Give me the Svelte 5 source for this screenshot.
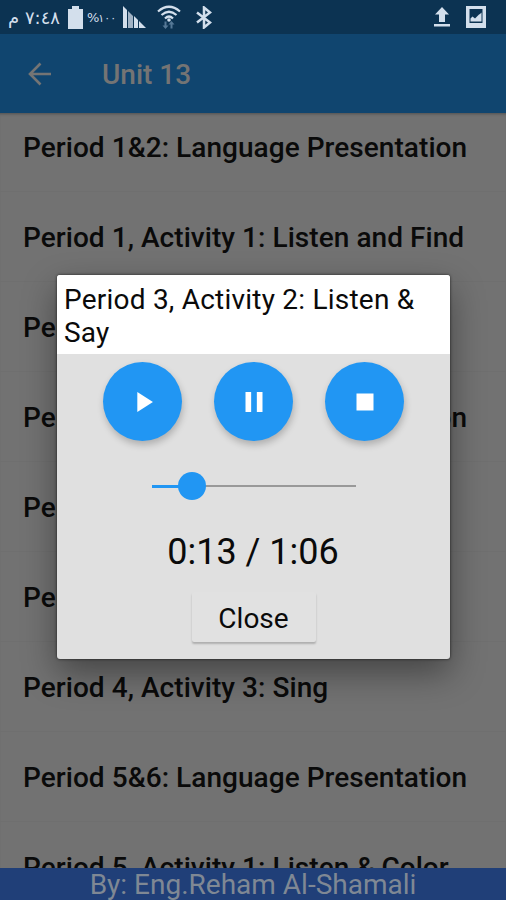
<script>
    let unit = "Unit 13";
    let lessons = [
        "Period 1&2: Language Presentation",
        "Period 1, Activity 1: Listen and Find",
        "Period 2, Activity 1: Listen & Say",
        "Period 3&4: Language Presentation",
        "Period 3, Activity 2: Listen & Say",
        "Period 4, Activity 1: Listen & Say",
        "Period 4, Activity 3: Sing",
        "Period 5&6: Language Presentation",
        "Period 5, Activity 1: Listen & Color",
    ];
    let current = lessons[4];

    let elapsed = 13;
    let duration = 66;

    const format = (s) => `${Math.floor(s / 60)}:${String(s % 60).padStart(2, "0")}`;

    // Material icon paths, 24x24
    let controls = [
        { name: "Play", path: "M8 5v14l11-7z" },
        { name: "Pause", path: "M6 19h4V5H6v14zm8-14v14h4V5h-4z" },
        { name: "Stop", path: "M6 6h12v12H6z" },
    ];
</script>

<div class="screen">
    <div class="status">
        <div class="group">
            <span class="clock" dir="rtl">٧:٤٨ م</span>
            <svg class="battery" width="15" height="23" viewBox="0 0 15 23">
                <path d="M4 0h7v3h4v20H0V3h4z" />
            </svg>
            <span class="percent">%<span class="digits">١٠٠</span></span>
            <svg class="signal" width="23" height="22" viewBox="0 0 23 22">
                <path d="M0 0l4 4v18H0z" />
                <path d="M5 5l5 5v12H5z" opacity="0.75" />
                <path d="M11 10l4 4v8h-4z" />
                <path d="M16 15l7 7h-7z" />
            </svg>
            <svg class="wifi" width="24" height="25" viewBox="0 0 24 25">
                <g fill="none" stroke="#d3dfec" stroke-width="2.2">
                    <path d="M1 6.5Q12-3 23 6.5" />
                    <path d="M4.5 10Q12 3.5 19.5 10" />
                    <path d="M8 13.5Q12 9.5 16 13.5" />
                </g>
                <circle cx="12" cy="15" r="1.8" />
                <path
                    d="M8.5 24l-3-3.500h2v-4h2v4h2zM14.500 16l3 3.500h-2v4h-2v-4h-2z"
                    fill="#557896"
                />
            </svg>
            <svg class="bluetooth" width="16" height="23" viewBox="0 0 16 23">
                <path
                    d="M1 6.500l13 10-6 5V1.500l6 5-13 10"
                    fill="none"
                    stroke="#d3dfec"
                    stroke-width="2.500"
                />
            </svg>
        </div>
        <div class="group">
            <svg class="upload" width="16" height="20" viewBox="0 0 16 20">
                <path d="M8 0l7 7.500h-4V15H5V7.500H1zM0 17h16v2.500H0z" />
            </svg>
            <svg width="20" height="22" viewBox="0 0 20 22">
                <path
                    d="M0 0h20v22H0zM3.500 3v14h13V3z"
                    fill-rule="evenodd"
                />
                <path d="M4.500 15.500v-3l2-2 2.500 2 4-4 1-.5 1.500-1.500v9z" />
            </svg>
        </div>
    </div>

    <header>
        <svg width="24" height="24" viewBox="0 0 24 24">
            <path
                d="M23 12H2M12.500 1.500L2 12l10.500 10.500"
                fill="none"
                stroke="#747474"
                stroke-width="2.600"
            />
        </svg>
        <h1>{unit}</h1>
    </header>

    <ul>
        {#each lessons as lesson}
            <li>{lesson}</li>
        {/each}
    </ul>

    <footer>By: Eng.Reham Al-Shamali</footer>

    <div class="dialog">
        <h2>{current}</h2>
        <div class="controls">
            {#each controls as control}
                <button class="round" aria-label={control.name}>
                    <svg width="34" height="34" viewBox="0 0 24 24">
                        <path d={control.path} />
                    </svg>
                </button>
            {/each}
        </div>
        <div class="slider">
            <div class="played" style="width: {(elapsed / duration) * 100}%"></div>
            <div class="thumb"></div>
            <div class="rest"></div>
        </div>
        <div class="time">{format(elapsed)} / {format(duration)}</div>
        <button class="close">Close</button>
    </div>
</div>

<style>
    :global(body) {
        margin: 0;
    }

    .screen {
        position: relative;
        display: flex;
        flex-direction: column;
        width: 506px;
        height: 900px;
        overflow: hidden;
        background: #727272;
        font-family: Roboto, "Liberation Sans", sans-serif;
        color: #0a0a0a;
    }

    .status {
        display: flex;
        justify-content: space-between;
        flex: none;
        height: 34px;
        box-sizing: border-box;
        padding: 0 20px 0 9px;
        background: #0c3352;
        color: #d3dfec;
    }

    .status svg {
        fill: #d3dfec;
    }

    .group {
        display: flex;
        align-items: center;
    }

    .clock {
        width: 51px;
        font: 18px "DejaVu Sans", sans-serif;
        white-space: nowrap;
    }

    .battery {
        margin-left: 8px;
    }

    .percent {
        width: 28px;
        margin: 0 8px 0 4px;
        font: 13px "DejaVu Sans", sans-serif;
        white-space: nowrap;
        /* keeps the percent sign on the left */
        direction: ltr;
        unicode-bidi: bidi-override;
    }

    .digits {
        font-size: 11px;
        margin-left: -1px;
    }

    .wifi {
        margin-left: 11px;
    }

    .bluetooth {
        margin-left: 15px;
    }

    .upload {
        margin-right: 16px;
    }

    header {
        display: flex;
        align-items: center;
        flex: none;
        height: 79px;
        box-sizing: border-box;
        padding: 0 28px 0;
        background: #10456f;
        color: #747474;
    }

    h1 {
        margin: 2px 0 0 50px;
        font-size: 28px;
        font-weight: 500;
    }

    ul {
        flex: 1;
        min-height: 0;
        margin: 0;
        padding: 0;
        overflow: hidden;
        list-style: none;
        box-shadow: inset 0 3px 3px -2px rgba(0, 0, 0, 0.3);
    }

    li {
        height: 90px;
        box-sizing: border-box;
        padding-left: 23px;
        border-bottom: 1px solid #6f6f6f;
        font-size: 28px;
        font-weight: 500;
        letter-spacing: 0.05px;
        line-height: 92px;
        white-space: nowrap;
    }

    li:first-child {
        margin-top: -11px;
    }

    footer {
        flex: none;
        height: 32px;
        background: #203f78;
        color: #7f8894;
        font-size: 28px;
        line-height: 34px;
        text-align: center;
    }

    .dialog {
        position: absolute;
        top: 275px;
        left: 57px;
        display: flex;
        flex-direction: column;
        align-items: center;
        width: 393px;
        height: 384px;
        overflow: hidden;
        border-radius: 3px;
        background: #e0e0e0;
        box-shadow:
            0 0 3px rgba(0, 0, 0, 0.7),
            0 14px 34px rgba(0, 0, 0, 0.4);
    }

    h2 {
        align-self: stretch;
        height: 79px;
        box-sizing: border-box;
        margin: 0;
        padding: 9px 7px 0;
        background: #fff;
        font-size: 28px;
        font-weight: 400;
        letter-spacing: 0.22px;
        line-height: 32.5px;
    }

    .controls {
        display: flex;
        gap: 32px;
        margin-top: 8px;
    }

    button {
        padding: 0;
        border: none;
        font-family: inherit;
        color: inherit;
    }

    .round {
        display: flex;
        align-items: center;
        justify-content: center;
        width: 79px;
        height: 79px;
        border-radius: 50%;
        background: #2196f3;
        box-shadow: 1px 4px 7px rgba(0, 0, 0, 0.22);
    }

    .round svg {
        fill: #fff;
    }

    .slider {
        display: flex;
        align-items: center;
        width: 204px;
        height: 28px;
        margin-top: 31px;
    }

    .played {
        height: 3px;
        background: #2196f3;
    }

    .thumb {
        z-index: 1;
        flex: none;
        width: 28px;
        height: 28px;
        margin: 0 -14px;
        border-radius: 50%;
        background: #2196f3;
    }

    .rest {
        flex: 1;
        height: 2px;
        background: #999;
    }

    .time {
        margin-top: 31px;
        padding-right: 1px;
        font-size: 36px;
        line-height: 42px;
    }

    .close {
        width: 124px;
        height: 50px;
        margin-top: 19px;
        padding-top: 2px;
        border-radius: 2px;
        background: #e1e1e1;
        box-shadow: 0 2px 2px rgba(0, 0, 0, 0.22);
        font-size: 28px;
    }
</style>
